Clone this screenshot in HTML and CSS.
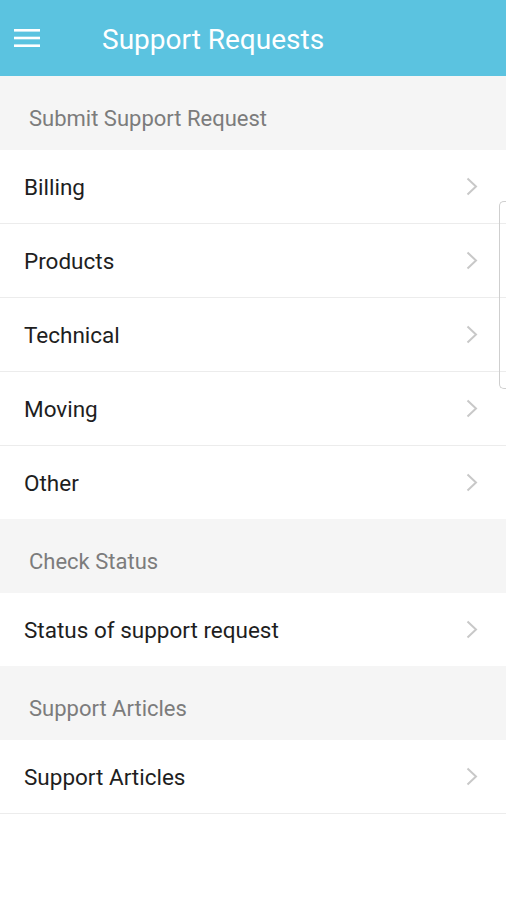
FILE: index.html
```html
<!DOCTYPE html>
<html lang="en">
<head>
    <meta charset="UTF-8">
    <meta name="viewport" content="width=device-width, initial-scale=1.0">
    <title>Support Requests</title>
    <link rel="stylesheet" href="styles.css">
</head>
<body>
    <header class="toolbar">
        <button class="menu-btn" aria-label="Menu">
            <svg width="26" height="18" viewBox="0 0 26 18">
                <rect x="0" y="0" width="26" height="2.6" fill="#fff"/>
                <rect x="0" y="7.7" width="26" height="2.6" fill="#fff"/>
                <rect x="0" y="15.4" width="26" height="2.6" fill="#fff"/>
            </svg>
        </button>
        <h1>Support Requests</h1>
    </header>

    <main class="content">
        <div class="section-title">Submit Support Request</div>
        <ul class="list">
            <li class="item">Billing <svg class="chevron" width="12" height="19" viewBox="0 0 12 19"><polyline points="1.5,1.5 10,9.5 1.5,17.5"/></svg></li>
            <li class="item">Products <svg class="chevron" width="12" height="19" viewBox="0 0 12 19"><polyline points="1.5,1.5 10,9.5 1.5,17.5"/></svg></li>
            <li class="item">Technical <svg class="chevron" width="12" height="19" viewBox="0 0 12 19"><polyline points="1.5,1.5 10,9.5 1.5,17.5"/></svg></li>
            <li class="item">Moving <svg class="chevron" width="12" height="19" viewBox="0 0 12 19"><polyline points="1.5,1.5 10,9.5 1.5,17.5"/></svg></li>
            <li class="item">Other <svg class="chevron" width="12" height="19" viewBox="0 0 12 19"><polyline points="1.5,1.5 10,9.5 1.5,17.5"/></svg></li>
        </ul>

        <div class="section-title">Check Status</div>
        <ul class="list">
            <li class="item">Status of support request <svg class="chevron" width="12" height="19" viewBox="0 0 12 19"><polyline points="1.5,1.5 10,9.5 1.5,17.5"/></svg></li>
        </ul>

        <div class="section-title">Support Articles</div>
        <ul class="list">
            <li class="item">Support Articles <svg class="chevron" width="12" height="19" viewBox="0 0 12 19"><polyline points="1.5,1.5 10,9.5 1.5,17.5"/></svg></li>
        </ul>
    </main>

    <div class="scroll-thumb"></div>
</body>
</html>
```

FILE: styles.css
```css
body {
    margin: 0;
    font-family: Roboto, "Noto Sans", sans-serif;
    background: #ffffff;
}
.toolbar {
    height: 76px;
    background-color: #5bc3e0;
    display: flex;
    align-items: center;
    box-sizing: border-box;
    padding-left: 14px;
}
.menu-btn {
    background: none;
    border: none;
    padding: 0;
    width: 26px;
    height: 18px;
    display: flex;
}
.toolbar h1 {
    margin: 3px 0 0 62px;
    color: #ffffff;
    font-size: 28px;
    font-weight: 400;
}
.content {
    background-color: #f5f5f5;
}
.section-title {
    height: 74px;
    box-sizing: border-box;
    padding: 30px 0 0 29px;
    font-size: 22px;
    color: #7c7c7c;
}
.list {
    list-style: none;
    margin: 0;
    padding: 0;
    background: #ffffff;
}
.item {
    height: 73px;
    box-sizing: border-box;
    display: flex;
    align-items: center;
    justify-content: space-between;
    padding: 0 28px 0 24px;
    font-size: 22.5px;
    color: #1e1e1e;
}
.item + .item {
    height: 74px;
    border-top: 1px solid #ececec;
}
.chevron {
    fill: none;
    stroke: #c8c8c8;
    stroke-width: 2;
}
.list:last-child {
    border-bottom: 1px solid #ececec;
}
.scroll-thumb {
    position: absolute;
    top: 201px;
    right: 0;
    width: 6px;
    height: 186px;
    border: 1px solid #cfcfcf;
    border-right: none;
    border-radius: 5px 0 0 5px;
}
```
